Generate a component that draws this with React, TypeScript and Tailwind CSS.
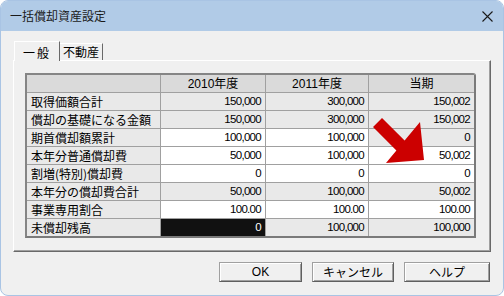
import React from 'react';

const jp = "font-['Noto_Sans_CJK_JP',sans-serif]";
const num = "font-['Liberation_Sans','Noto_Sans_CJK_JP',sans-serif] text-[11.5px] tracking-[-0.7px]";

type Cell = { v: string; bg: 'g' | 'w' | 'k' };

const rows: { label: string; cells: Cell[] }[] = [
  { label: '取得価額合計', cells: [{ v: '150,000', bg: 'g' }, { v: '300,000', bg: 'g' }, { v: '150,002', bg: 'g' }] },
  { label: '償却の基礎になる金額', cells: [{ v: '150,000', bg: 'g' }, { v: '300,000', bg: 'g' }, { v: '150,002', bg: 'g' }] },
  { label: '期首償却額累計', cells: [{ v: '100,000', bg: 'w' }, { v: '100,000', bg: 'w' }, { v: '0', bg: 'g' }] },
  { label: '本年分普通償却費', cells: [{ v: '50,000', bg: 'w' }, { v: '100,000', bg: 'w' }, { v: '50,002', bg: 'w' }] },
  { label: '割増(特別)償却費', cells: [{ v: '0', bg: 'w' }, { v: '0', bg: 'w' }, { v: '0', bg: 'w' }] },
  { label: '本年分の償却費合計', cells: [{ v: '50,000', bg: 'g' }, { v: '100,000', bg: 'g' }, { v: '50,002', bg: 'g' }] },
  { label: '事業専用割合', cells: [{ v: '100.00', bg: 'w' }, { v: '100.00', bg: 'w' }, { v: '100.00', bg: 'w' }] },
  { label: '未償却残高', cells: [{ v: '0', bg: 'k' }, { v: '100,000', bg: 'g' }, { v: '100,000', bg: 'g' }] },
];

const colW = ['w-[105px]', 'w-[103px]', 'w-[105px]'];
const bgCls = { g: 'bg-[#e9e9e9] text-black', w: 'bg-white text-black', k: 'bg-[#111111] text-white' };

function Btn({ children, w }: { children: React.ReactNode; w: string }) {
  return (
    <button className={`${jp} ${w} h-[20px] flex items-center justify-center text-[12px] leading-none text-black bg-[#f0f0f0] border border-[#a0a0a0] border-r-[#5f5f5f] border-b-[#5f5f5f] shadow-[inset_1px_1px_0_#ffffff,inset_-1px_-1px_0_#a0a0a0]`}>
      {children}
    </button>
  );
}

export default function App() {
  return (
    <div className="relative w-[504px] h-[296px] bg-white">
      <div className="w-full h-full flex flex-col rounded-[8px] border border-[#a9c4e4] bg-[#f0f0f0] overflow-hidden">
        {/* title bar */}
        <div className="h-[30px] shrink-0 bg-[#b1cbe7] flex items-center justify-between pl-[9px] pr-[10px]">
          <span className={`${jp} text-[12px] leading-none text-[#1a1a1a]`}>一括償却資産設定</span>
          <svg width="11" height="11" viewBox="0 0 11 11">
            <path d="M0.5 0.5 L10.5 10.5 M10.5 0.5 L0.5 10.5" stroke="#1a1a1a" strokeWidth="1.1" />
          </svg>
        </div>

        <div className="flex-1 flex flex-col px-[12px] pt-[10px]">
          {/* tabs */}
          <div className="relative z-10 flex items-end h-[20px] -mb-px pl-px">
            <div className={`${jp} h-[20px] w-[46px] flex items-center justify-center pt-[2px] text-[12px] leading-none text-black bg-[#f0f0f0] border-t border-l border-white border-r border-r-[#696969] tracking-[2px]`}>
              一般
            </div>
            <div className={`${jp} h-[17px] w-[43px] mb-px flex items-center justify-center text-[12px] leading-none text-black bg-[#f0f0f0] border-t border-white border-r border-r-[#696969]`}>
              不動産
            </div>
          </div>

          {/* panel */}
          <div className="h-[192px] border-t border-l border-white border-r border-b border-r-[#696969] border-b-[#696969] shadow-[inset_-1px_-1px_0_#a0a0a0] pl-[11px] pt-[12px]">
            <div className="w-[451px] border-2 border-[#858585] border-r-[#7a7a7a] border-b-[#7a7a7a] rounded-tr-[3px] overflow-hidden">
              {/* header */}
              <div className="flex h-[18px] bg-[#dadada] border-b border-[#a0a0a0]">
                <div className="w-[134px] border-r border-[#a0a0a0]" />
                {['2010年度', '2011年度', '当期'].map((h, i) => (
                  <div
                    key={h}
                    className={`${colW[i]} ${i < 2 ? 'border-r border-[#a0a0a0]' : ''} flex items-center justify-center font-['Liberation_Sans','Noto_Sans_CJK_JP',sans-serif] text-[12px] leading-none text-black`}
                  >
                    {h}
                  </div>
                ))}
              </div>
              {rows.map((r, ri) => (
                <div key={r.label} className={`flex ${ri < rows.length - 1 ? 'h-[18px] border-b border-[#a0a0a0]' : 'h-[17px]'}`}>
                  <div className={`${jp} w-[134px] bg-[#e9e9e9] border-r border-[#a0a0a0] flex items-center pl-[4px] text-[12px] leading-none text-black whitespace-nowrap`}>
                    {r.label}
                  </div>
                  {r.cells.map((c, ci) => (
                    <div
                      key={ci}
                      className={`${colW[ci]} ${bgCls[c.bg]} ${ci < 2 ? 'border-r border-[#a0a0a0]' : ''} ${num} flex items-center justify-end pr-[4px] leading-none`}
                    >
                      {c.v}
                    </div>
                  ))}
                </div>
              ))}
            </div>
          </div>

          {/* buttons */}
          <div className="flex justify-end gap-[10px] mt-[10px] pr-px">
            <Btn w="w-[83px]"><span className="font-['Liberation_Sans',sans-serif]">OK</span></Btn>
            <Btn w="w-[82px]">キャンセル</Btn>
            <Btn w="w-[86px]">ヘルプ</Btn>
          </div>
        </div>
      </div>

      {/* red arrow annotation */}
      <svg className="absolute left-0 top-0 pointer-events-none" width="504" height="296" viewBox="0 0 504 296">
        <polygon
          points="373,127 382,118 404.6,140.6 420,122 424,160 386,163 396.4,150.4"
          fill="#cc0000"
        />
      </svg>
    </div>
  );
}
